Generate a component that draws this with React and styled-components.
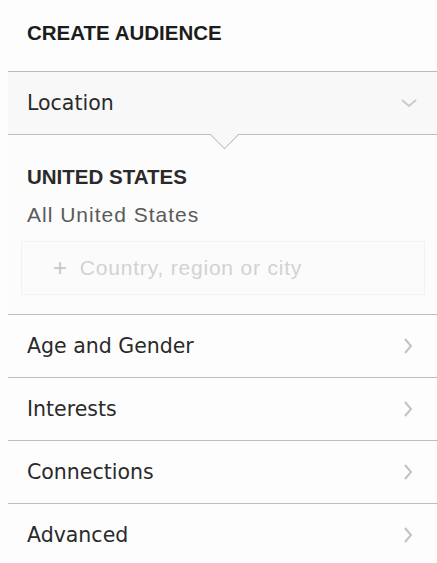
import React from 'react'
import styled, {createGlobalStyle} from 'styled-components'

const Global = createGlobalStyle`
  html, body {
    margin: 0;
    background: #fdfdfd;
  }
`;

const Panel = styled.div`
  width: 437px;
  min-height: 563px;
  padding-left: 8px;
  box-sizing: border-box;
  background: #fdfdfd;
`;

const Title = styled.div`
  height: 72px;
  display: flex;
  align-items: center;
  padding: 0 0 6px 19px;
  box-sizing: border-box;
  border-bottom: 1px solid #b9b9b9;
  font-family: "Liberation Sans", Arial, sans-serif;
  font-weight: 700;
  font-size: 20.5px;
  color: #1c1c1c;
`;

const Row = styled.div`
  position: relative;
  height: 63px;
  display: flex;
  align-items: center;
  justify-content: space-between;
  padding: 0 ${p => (p.$open ? '19px' : '20px')} 0 19px;
  box-sizing: border-box;
  border-bottom: 1px solid #bdbdbd;
  background: ${p => (p.$open ? '#f8f8f8' : 'transparent')};
  font-family: "DejaVu Sans", Verdana, sans-serif;
  font-size: 20.5px;
  color: #2a2a2a;

  /* little pointer under the open section */
  ${p => p.$open && `
    &::after {
      content: '';
      position: absolute;
      left: 206px;
      bottom: -11px;
      width: 20px;
      height: 20px;
      background: #f8f8f8;
      border-right: 1px solid #bdbdbd;
      border-bottom: 1px solid #bdbdbd;
      transform: rotate(45deg);
    }
  `}
`;

const Expanded = styled.div`
  padding: 30px 12px 19px 19px;
  border-bottom: 1px solid #bdbdbd;
  background: #fcfcfc;
`;

const Country = styled.div`
  font-family: "Liberation Sans", Arial, sans-serif;
  font-weight: 700;
  font-size: 20.5px;
  line-height: 24px;
  color: #2a2a2a;
`;

const Scope = styled.div`
  margin-top: 13px;
  font-family: "Liberation Sans", Arial, sans-serif;
  font-size: 21px;
  line-height: 26px;
  letter-spacing: 1px;
  color: #5a5a5a;
`;

const Search = styled.div`
  margin: 13px 0 0 -6px;
  height: 52px;
  display: flex;
  align-items: center;
  gap: 12px;
  padding-left: 31px;
  border: 1px solid #f1f1f1;
  background: #fbfbfb;
  font-family: "Liberation Sans", Arial, sans-serif;
  font-size: 21px;
  letter-spacing: 0.8px;
  color: #d2d2d2;
`;

const Plus = styled.span`
  font-size: 24px;
  color: #c6c6c6;
`;

const Chevron = ({down}) => (
  <svg width="18" height="18" viewBox="0 0 18 18">
    <polyline
      points={down ? '2,6 9,12 16,6' : '6,2 12,9 6,16'}
      fill="none"
      stroke={down ? '#cbcbcb' : '#c2c2c2'}
      strokeWidth="2"
    />
  </svg>
);

const sections = ['Age and Gender', 'Interests', 'Connections', 'Advanced'];

export default function App() {
  return (
    <Panel>
      <Global />
      <Title>CREATE AUDIENCE</Title>
      <Row $open>
        <span>Location</span>
        <Chevron down />
      </Row>
      <Expanded>
        <Country>UNITED STATES</Country>
        <Scope>All United States</Scope>
        <Search>
          <Plus>+</Plus>
          <span>Country, region or city</span>
        </Search>
      </Expanded>
      {sections.map(s => (
        <Row key={s}>
          <span>{s}</span>
          <Chevron />
        </Row>
      ))}
    </Panel>
  )
}
